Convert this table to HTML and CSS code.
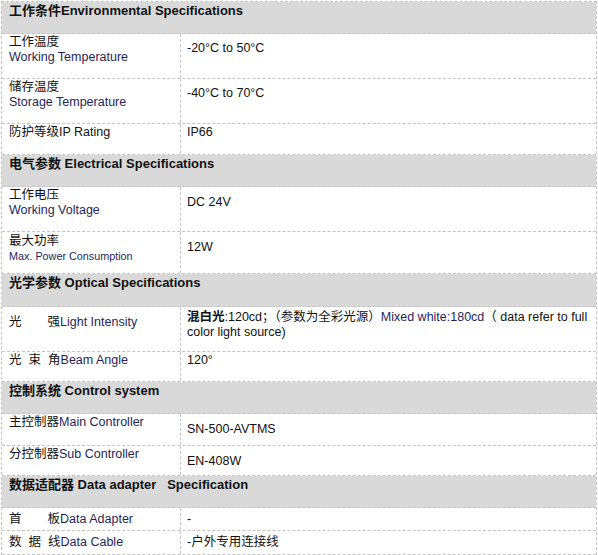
FILE: index.html
```html
<!DOCTYPE html>
<html lang="zh">
<head>
<meta charset="utf-8">
<title>Specifications</title>
<link rel="stylesheet" href="styles.css">
</head>
<body>
<div class="sheet">
  <div class="head h32">工作条件Environmental Specifications</div>
  <div class="row h45">
    <div class="k pt1">工作温度<br><span class="en">Working Temperature</span></div>
    <div class="v pt7">-20°C to 50°C</div>
  </div>
  <div class="row h45">
    <div class="k pt1">储存温度<br><span class="en">Storage Temperature</span></div>
    <div class="v pt7">-40°C to 70°C</div>
  </div>
  <div class="row h31">
    <div class="k pt1">防护等级IP Rating</div>
    <div class="v pt1">IP66</div>
  </div>

  <div class="head h32">电气参数 Electrical Specifications</div>
  <div class="row h45">
    <div class="k pt1">工作电压<br><span class="en">Working Voltage</span></div>
    <div class="v pt8">DC 24V</div>
  </div>
  <div class="row h42">
    <div class="k pt2">最大功率<br><span class="en small">Max. Power Consumption</span></div>
    <div class="v pt8">12W</div>
  </div>

  <div class="head h33">光学参数 Optical Specifications</div>
  <div class="row h45">
    <div class="k pt8"><span class="c gap27">光</span>强<span class="en">Light Intensity</span></div>
    <div class="v pt3"><span class="line"><b>混白光</b>:120cd；（参数为全彩光源）<span class="en">Mixed white:180cd</span>（ data refer to full</span><br>color light source)</div>
  </div>
  <div class="row h30">
    <div class="k pt1"><span class="c gap7">光</span><span class="c gap7">束</span>角<span class="en">Beam Angle</span></div>
    <div class="v pt1">120°</div>
  </div>

  <div class="head h32">控制系统 Control system</div>
  <div class="row h32">
    <div class="k pt1">主控制器<span class="en">Main Controller</span></div>
    <div class="v pt8">SN-500-AVTMS</div>
  </div>
  <div class="row h30">
    <div class="k pt1">分控制器<span class="en">Sub Controller</span></div>
    <div class="v pt8">EN-408W</div>
  </div>

  <div class="head h32">数据适配器 Data adapter&nbsp;&nbsp; Specification</div>
  <div class="row h23">
    <div class="k pt4"><span class="c gap27">首</span>板<span class="en">Data Adapter</span></div>
    <div class="v pt4">-</div>
  </div>
  <div class="row h24">
    <div class="k pt4"><span class="c gap7">数</span><span class="c gap7">据</span>线<span class="en">Data Cable</span></div>
    <div class="v pt4">-户外专用连接线</div>
  </div>
</div>
</body>
</html>
```

FILE: styles.css
```css
html, body {
  margin: 0;
  padding: 0;
  background: #ffffff;
}

body {
  font-family: "Liberation Sans", Arial, "Noto Sans CJK SC", sans-serif;
  font-size: 12.5px;
  line-height: 15px;
  color: #111111;
}

.sheet {
  width: 596px;
  margin: 1px 0 0 1px;
  border-top: 1px dashed #c4c4c4;
  border-left: 1px dashed #c4c4c4;
  border-right: 1px dashed #c4c4c4;
  display: flex;
  flex-direction: column;
  box-sizing: border-box;
}

.head {
  background: #d9d9d9;
  font-weight: bold;
  font-size: 13px;
  color: #111111;
  padding: 1px 0 0 7px;
  border-bottom: 1px dashed #c4c4c4;
  box-sizing: border-box;
}

.row {
  display: grid;
  grid-template-columns: 179px 1fr;
  border-bottom: 1px dashed #c4c4c4;
  box-sizing: border-box;
}

.k {
  padding-left: 7px;
  border-right: 1px dashed #c4c4c4;
}

.v {
  padding-left: 6px;
  white-space: nowrap;
}

.line {
  white-space: nowrap;
}

.en {
  color: #1f1f5c;
}

.small {
  font-size: 10.8px;
}

.c {
  display: inline-block;
}

.gap7 { margin-right: 7px; }
.gap27 { margin-right: 26px; }

.pt1 { padding-top: 1px; }
.pt2 { padding-top: 2px; }
.pt3 { padding-top: 3px; }
.pt4 { padding-top: 4px; }
.pt7 { padding-top: 7px; }
.pt8 { padding-top: 8px; }

.h23 { height: 23px; }
.h24 { height: 24px; }
.h30 { height: 30px; }
.h31 { height: 31px; }
.h32 { height: 32px; }
.h33 { height: 33px; }
.h42 { height: 42px; }
.h45 { height: 45px; }
```
